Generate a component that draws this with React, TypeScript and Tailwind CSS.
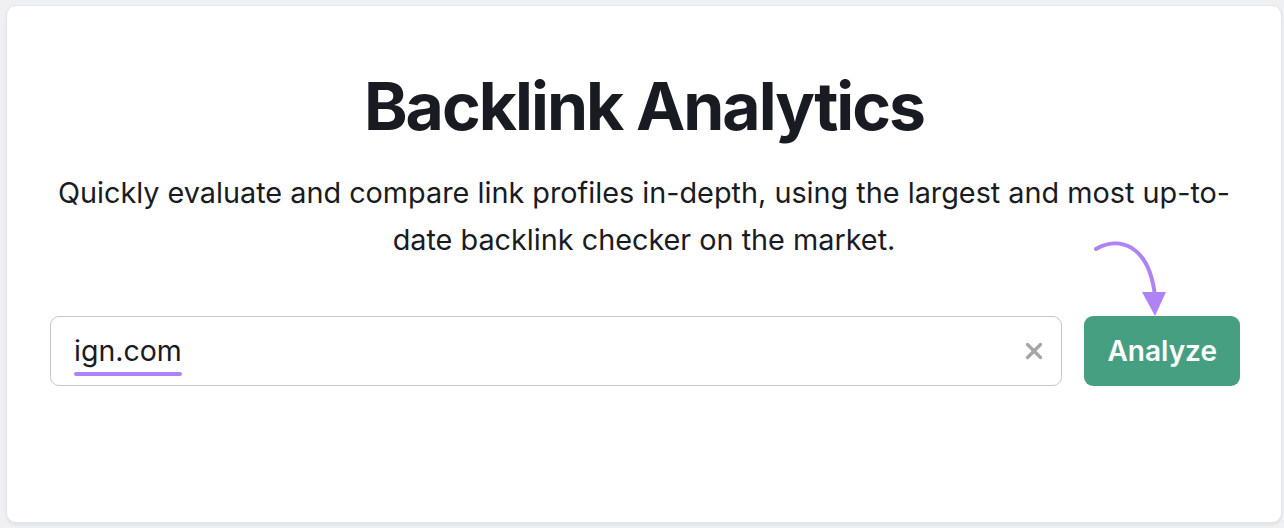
import { X } from "lucide-react"

export default function App() {
  return (
    <div className="h-[528px] bg-[#eef0f4] pt-[5px] pl-[6px] pr-[2px] font-['Inter',sans-serif] text-[#191b23]">
      <div className="flex h-[518px] flex-col items-center rounded-[10px] border border-[#e3e5ea] bg-white shadow-[0_2px_3px_rgba(0,0,0,0.06)]">
        {/* Header */}
        <h1 className="mt-[60px] text-[66px] font-bold leading-[80px] tracking-[-0.03em]">
          Backlink Analytics
        </h1>
        <p className="mt-[23px] max-w-[1180px] text-center text-[28.8px] leading-[47px]">
          Quickly evaluate and compare link profiles in-depth, using the largest and most up-to-date backlink checker on the market.
        </p>

        {/* Search row */}
        <div className="mt-[53px] flex w-full gap-[22px] pl-[43px] pr-[41px]">
          <div className="flex h-[70px] flex-1 items-center rounded-[9px] border border-[#c5c8d0] pl-[23px] pr-[14px]">
            <span className="relative text-[28.5px] leading-none">
              ign.com
              <span className="absolute -bottom-[11px] left-0 h-[4px] w-full rounded-sm bg-[#b083f5]"></span>
            </span>
            <X className="ml-auto h-[26px] w-[26px] text-[#a3a5ad]" strokeWidth={3} />
          </div>
          <div className="relative">
            <svg
              className="absolute bottom-full left-[3px]"
              width="84"
              height="80"
              viewBox="0 0 84 80"
              fill="none"
            >
              <path d="M9 13 C 32 0, 62 8, 68 60" stroke="#b083f5" strokeWidth="4" strokeLinecap="round" />
              <polygon points="55,56 79,56 68,80" fill="#b083f5" />
            </svg>
            <button className="h-[70px] rounded-[9px] bg-[#469f81] px-[23px] text-[28px] font-semibold text-white">
              Analyze
            </button>
          </div>
        </div>
      </div>
    </div>
  )
}
